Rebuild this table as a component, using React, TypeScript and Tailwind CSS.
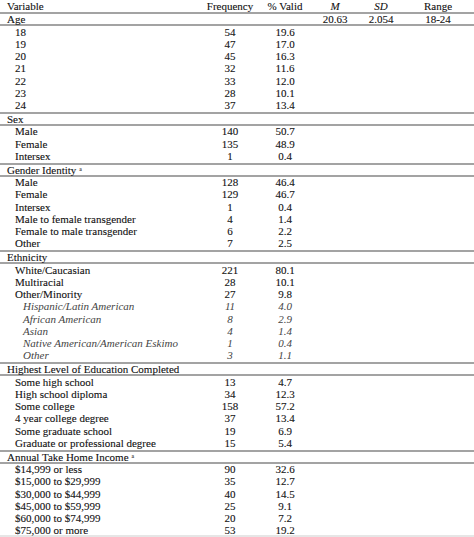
import React from 'react';

type Row = { label: string; freq: string; pct: string; sub?: boolean };
type Section = { title: string; note?: boolean; stats?: [string, string, string]; rows: Row[] };

const sections: Section[] = [
  {
    title: 'Age',
    stats: ['20.63', '2.054', '18-24'],
    rows: [
      { label: '18', freq: '54', pct: '19.6' },
      { label: '19', freq: '47', pct: '17.0' },
      { label: '20', freq: '45', pct: '16.3' },
      { label: '21', freq: '32', pct: '11.6' },
      { label: '22', freq: '33', pct: '12.0' },
      { label: '23', freq: '28', pct: '10.1' },
      { label: '24', freq: '37', pct: '13.4' },
    ],
  },
  {
    title: 'Sex',
    rows: [
      { label: 'Male', freq: '140', pct: '50.7' },
      { label: 'Female', freq: '135', pct: '48.9' },
      { label: 'Intersex', freq: '1', pct: '0.4' },
    ],
  },
  {
    title: 'Gender Identity',
    note: true,
    rows: [
      { label: 'Male', freq: '128', pct: '46.4' },
      { label: 'Female', freq: '129', pct: '46.7' },
      { label: 'Intersex', freq: '1', pct: '0.4' },
      { label: 'Male to female transgender', freq: '4', pct: '1.4' },
      { label: 'Female to male transgender', freq: '6', pct: '2.2' },
      { label: 'Other', freq: '7', pct: '2.5' },
    ],
  },
  {
    title: 'Ethnicity',
    rows: [
      { label: 'White/Caucasian', freq: '221', pct: '80.1' },
      { label: 'Multiracial', freq: '28', pct: '10.1' },
      { label: 'Other/Minority', freq: '27', pct: '9.8' },
      { label: 'Hispanic/Latin American', freq: '11', pct: '4.0', sub: true },
      { label: 'African American', freq: '8', pct: '2.9', sub: true },
      { label: 'Asian', freq: '4', pct: '1.4', sub: true },
      { label: 'Native American/American Eskimo', freq: '1', pct: '0.4', sub: true },
      { label: 'Other', freq: '3', pct: '1.1', sub: true },
    ],
  },
  {
    title: 'Highest Level of Education Completed',
    rows: [
      { label: 'Some high school', freq: '13', pct: '4.7' },
      { label: 'High school diploma', freq: '34', pct: '12.3' },
      { label: 'Some college', freq: '158', pct: '57.2' },
      { label: '4 year college degree', freq: '37', pct: '13.4' },
      { label: 'Some graduate school', freq: '19', pct: '6.9' },
      { label: 'Graduate or professional degree', freq: '15', pct: '5.4' },
    ],
  },
  {
    title: 'Annual Take Home Income',
    note: true,
    rows: [
      { label: '$14,999 or less', freq: '90', pct: '32.6' },
      { label: '$15,000 to $29,999', freq: '35', pct: '12.7' },
      { label: '$30,000 to $44,999', freq: '40', pct: '14.5' },
      { label: '$45,000 to $59,999', freq: '25', pct: '9.1' },
      { label: '$60,000 to $74,999', freq: '20', pct: '7.2' },
      { label: '$75,000 or more', freq: '53', pct: '19.2' },
    ],
  },
];

const grid = 'grid grid-cols-[205px_50px_60px_40px_52px_62px] items-center';

export default function App() {
  return (
    <div className="w-[474px] h-[537px] bg-white text-[#111] text-[11px] leading-none font-['Liberation_Serif','Times_New_Roman',serif] [-webkit-text-stroke:0.1px_#111] overflow-hidden shadow-[inset_0_-2px_0_#e6e6e6]">
      {/* column headings */}
      <div className={`${grid} h-[12px]`}>
        <span className="pl-[7px]">Variable</span>
        <span className="text-center">Frequency</span>
        <span className="text-center">% Valid</span>
        <span className="text-center italic">M</span>
        <span className="text-center italic">SD</span>
        <span className="text-center">Range</span>
      </div>

      {sections.map((s) => (
        <div key={s.title}>
          <div className={`${grid} h-[14px] border-y-2 border-[#a3a3a3]`}>
            <span className="pl-[7px] whitespace-nowrap">
              {s.title}
              {s.note && <span className="text-[6px] text-[#777] ml-[3px] relative -top-[3px]">a</span>}
            </span>
            <span />
            <span />
            <span className="text-center">{s.stats?.[0]}</span>
            <span className="text-center">{s.stats?.[1]}</span>
            <span className="text-center">{s.stats?.[2]}</span>
          </div>
          {s.rows.map((r, i) => (
            <div
              key={i}
              className={`${grid} h-[12.25px] ${r.sub ? 'italic text-[#444] [-webkit-text-stroke:0px]' : ''}`}
            >
              <span className={`whitespace-nowrap ${r.sub ? 'pl-[23px]' : 'pl-[15px]'}`}>{r.label}</span>
              <span className="text-center">{r.freq}</span>
              <span className="text-center">{r.pct}</span>
            </div>
          ))}
        </div>
      ))}
    </div>
  );
}
